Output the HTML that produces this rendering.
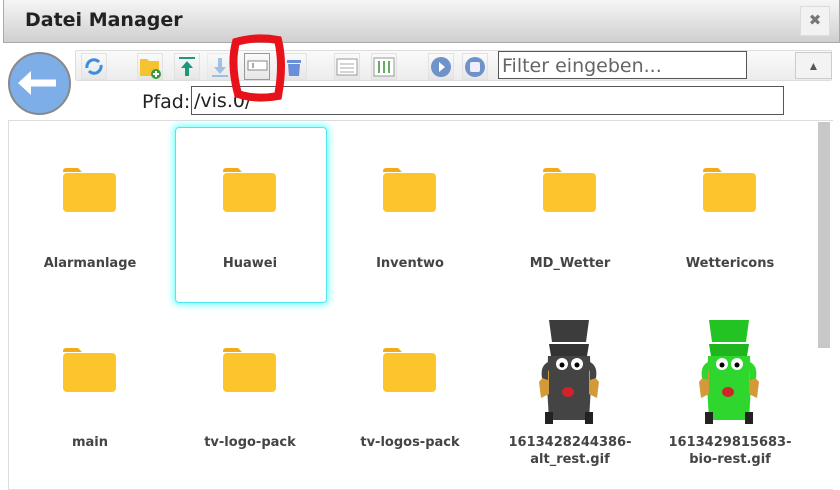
<!DOCTYPE html>
<html><head><meta charset="utf-8"><style>
*{box-sizing:border-box;margin:0;padding:0}
body{width:840px;height:484px;overflow:hidden;background:#fff;font-family:"Liberation Sans","DejaVu Sans",sans-serif;position:relative}
.title{position:absolute;left:3px;top:0;width:837px;height:43px;background:linear-gradient(#f6f6f6,#cfcfcf);border:1px solid #aaa;border-top:none}
.title span{position:absolute;left:21px;top:9px;font-size:19px;font-weight:bold;color:#222;font-family:"DejaVu Sans",sans-serif}
.close{position:absolute;left:800px;top:6px;width:30px;height:30px;background:#f2f2f2;border:1px solid #ddd;text-align:center;line-height:28px;color:#777;font-size:15px;font-weight:bold}
.tb{position:absolute;left:75px;top:50px;width:757px;height:31px;background:linear-gradient(#fafafa,#ececec);border:1px solid #ddd;border-radius:2px}
.btn{position:absolute;top:53px;width:26px;height:27px;background:linear-gradient(#fafafa,#e6e6e6);border:1px solid #e2e2e2}
.back{position:absolute;left:8px;top:52px;width:63px;height:63px;border-radius:50%;background:#7eaee8;border:2px solid #888}
.filter{position:absolute;left:498px;top:51px;width:249px;height:28px;border:1px solid #555;background:#fff;font-size:19px;color:#666;padding:3px 3px;font-family:"DejaVu Sans",sans-serif}
.warn{position:absolute;left:795px;top:52px;width:37px;height:27px;border:1px solid #ccc;background:#f3f3f3;text-align:center;line-height:26px;font-size:12px;color:#555}
.pfad{position:absolute;left:142px;top:91px;font-size:19px;color:#222;font-family:"DejaVu Sans",sans-serif}
.path{position:absolute;left:191px;top:86px;width:593px;height:29px;border:1px solid #555;background:#fff;font-size:19px;color:#222;padding:3px 2px;font-family:"DejaVu Sans",sans-serif}
.area{position:absolute;left:8px;top:120px;width:825px;height:370px;border:1px solid #ddd;border-right:none}
.sb{position:absolute;left:818px;top:122px;width:12px;height:226px;background:#c8c8c8}
.sel{position:absolute;left:175px;top:127px;width:152px;height:176px;border:1px solid #4ee8f0;border-radius:4px;box-shadow:0 0 7px 2px #7ff}
.item{position:absolute;width:160px;text-align:center;font-size:13px;font-weight:bold;color:#444;line-height:17px;font-family:"DejaVu Sans",sans-serif}
.fold{position:absolute;width:54px;height:45px}
</style></head><body>
<div class="title"><span>Datei Manager</span></div>
<div class="close">✖</div>
<div class="tb"></div>
<div class="btn" style="left:81px"><svg width="24" height="25"><path d="M5 14a7 7 0 0 1 12-6" stroke="#3b8de0" stroke-width="3" fill="none"/><path d="M19 11a7 7 0 0 1-12 6" stroke="#3b8de0" stroke-width="3" fill="none"/></svg></div>
<div class="btn" style="left:137px"><svg width="24" height="25"><path d="M2 5h7l2 2h10v15H2z" fill="#f5c330"/><circle cx="18" cy="20" r="5" fill="#3a9a3a"/><path d="M18 17v6M15 20h6" stroke="#fff" stroke-width="2"/></svg></div>
<div class="btn" style="left:174px"><svg width="24" height="25"><path d="M4 4h16" stroke="#1a9a7a" stroke-width="2"/><path d="M12 7l-6 7h4v8h4v-8h4z" fill="#1a9a7a"/></svg></div>
<div class="btn" style="left:207px;opacity:.55"><svg width="24" height="25"><path d="M12 20l-6-7h4V4h4v9h4z" fill="#5b9ad8"/><path d="M4 22h16" stroke="#5b9ad8" stroke-width="2"/></svg></div>
<div class="btn" style="left:244px;border-color:#999"><svg width="24" height="25"><rect x="3" y="7" width="19" height="9" fill="#fff" stroke="#888"/><path d="M8 9v5" stroke="#555"/></svg></div>
<div class="btn" style="left:281px"><svg width="24" height="25"><rect x="5" y="6" width="14" height="3" fill="#6a8fd8"/><path d="M6 10h12l-1 12H7z" fill="#6a8fd8"/></svg></div>
<div class="btn" style="left:334px"><svg width="24" height="25"><rect x="2" y="5" width="20" height="16" fill="#fff" stroke="#999"/><path d="M5 10h14M5 14h14M5 18h14" stroke="#aaa"/></svg></div>
<div class="btn" style="left:371px"><svg width="24" height="25"><rect x="2" y="4" width="20" height="18" fill="#fff" stroke="#999"/><path d="M7 7v12M12 7v12M17 7v12" stroke="#6a6" stroke-width="2"/></svg></div>
<div class="btn" style="left:428px"><svg width="24" height="25"><circle cx="12" cy="13" r="10" fill="#6f93c8"/><path d="M10 8l6 5-6 5z" fill="#fff"/></svg></div>
<div class="btn" style="left:462px"><svg width="24" height="25"><circle cx="12" cy="13" r="10" fill="#6f93c8"/><rect x="7" y="8" width="10" height="10" rx="2" fill="#eef"/></svg></div>
<div class="filter">Filter eingeben...</div>
<div class="warn">▲</div>
<div class="back"><svg width="59" height="59"><path d="M14 29h32" stroke="#fff" stroke-width="7"/><path d="M8 29l13-12v24z" fill="#fff"/></svg></div>
<div class="pfad">Pfad:</div>
<div class="path">/vis.0/</div>
<div class="area"></div>
<div class="sb"></div>
<div class="sel"></div>
<svg style="position:absolute;left:226px;top:34px" width="62" height="68"><path d="M10 8 Q30 2 52 6 Q58 30 52 62 Q30 66 12 60 Q4 30 10 8z" fill="none" stroke="#e8121b" stroke-width="8"/></svg>
<svg class="fold" style="left:63px;top:168px"><path d="M0 3a3 3 0 0 1 3-3h12l4 4h-19z" fill="#f4a915"/><rect x="0" y="5" width="53" height="39" rx="4" fill="#fcc52b"/></svg>
<svg class="fold" style="left:223px;top:168px"><path d="M0 3a3 3 0 0 1 3-3h12l4 4h-19z" fill="#f4a915"/><rect x="0" y="5" width="53" height="39" rx="4" fill="#fcc52b"/></svg>
<svg class="fold" style="left:383px;top:168px"><path d="M0 3a3 3 0 0 1 3-3h12l4 4h-19z" fill="#f4a915"/><rect x="0" y="5" width="53" height="39" rx="4" fill="#fcc52b"/></svg>
<svg class="fold" style="left:543px;top:168px"><path d="M0 3a3 3 0 0 1 3-3h12l4 4h-19z" fill="#f4a915"/><rect x="0" y="5" width="53" height="39" rx="4" fill="#fcc52b"/></svg>
<svg class="fold" style="left:703px;top:168px"><path d="M0 3a3 3 0 0 1 3-3h12l4 4h-19z" fill="#f4a915"/><rect x="0" y="5" width="53" height="39" rx="4" fill="#fcc52b"/></svg>
<svg class="fold" style="left:63px;top:348px"><path d="M0 3a3 3 0 0 1 3-3h12l4 4h-19z" fill="#f4a915"/><rect x="0" y="5" width="53" height="39" rx="4" fill="#fcc52b"/></svg>
<svg class="fold" style="left:223px;top:348px"><path d="M0 3a3 3 0 0 1 3-3h12l4 4h-19z" fill="#f4a915"/><rect x="0" y="5" width="53" height="39" rx="4" fill="#fcc52b"/></svg>
<svg class="fold" style="left:383px;top:348px"><path d="M0 3a3 3 0 0 1 3-3h12l4 4h-19z" fill="#f4a915"/><rect x="0" y="5" width="53" height="39" rx="4" fill="#fcc52b"/></svg>
<svg style="position:absolute;left:535px;top:316px" width="70" height="114"><path d="M14 4h40l-3 22H17z" fill="#3c3c3c"/><path d="M14 28h40l-2 12H16z" fill="#333"/><path d="M13 40h42l1 30-2 34H14l-2-34z" fill="#444"/><path d="M4 66l10-12v24l-8 4zM64 66l-10-12v24l8 4z" fill="#d49a3a"/><path d="M13 46q-8 4-6 16l6 2zM55 46q8 4 6 16l-6 2z" fill="#444"/><circle cx="27" cy="48" r="6" fill="#fff"/><circle cx="42" cy="48" r="6" fill="#fff"/><circle cx="27" cy="49" r="2.5" fill="#000"/><circle cx="42" cy="49" r="2.5" fill="#000"/><ellipse cx="33" cy="76" rx="6" ry="5" fill="#d2222a"/><rect x="10" y="96" width="8" height="12" fill="#222"/><rect x="50" y="96" width="8" height="12" fill="#222"/></svg>
<svg style="position:absolute;left:695px;top:316px" width="70" height="114"><path d="M14 4h40l-3 22H17z" fill="#24c324"/><path d="M14 28h40l-2 12H16z" fill="#1fb51f"/><path d="M13 40h42l1 30-2 34H14l-2-34z" fill="#2ed62e"/><path d="M4 66l10-12v24l-8 4zM64 66l-10-12v24l8 4z" fill="#d49a3a"/><path d="M13 46q-8 4-6 16l6 2zM55 46q8 4 6 16l-6 2z" fill="#2ed62e"/><circle cx="27" cy="48" r="6" fill="#fff"/><circle cx="42" cy="48" r="6" fill="#fff"/><circle cx="27" cy="49" r="2.5" fill="#000"/><circle cx="42" cy="49" r="2.5" fill="#000"/><ellipse cx="33" cy="76" rx="6" ry="5" fill="#d2222a"/><rect x="10" y="96" width="8" height="12" fill="#222"/><rect x="50" y="96" width="8" height="12" fill="#222"/></svg>
<div class="item" style="left:10px;top:255px">Alarmanlage</div>
<div class="item" style="left:170px;top:255px">Huawei</div>
<div class="item" style="left:330px;top:255px">Inventwo</div>
<div class="item" style="left:490px;top:255px">MD_Wetter</div>
<div class="item" style="left:650px;top:255px">Wettericons</div>
<div class="item" style="left:10px;top:434px">main</div>
<div class="item" style="left:170px;top:434px">tv-logo-pack</div>
<div class="item" style="left:330px;top:434px">tv-logos-pack</div>
<div class="item" style="left:490px;top:434px">1613428244386-<br>alt_rest.gif</div>
<div class="item" style="left:650px;top:434px">1613429815683-<br>bio-rest.gif</div>
</body></html>
